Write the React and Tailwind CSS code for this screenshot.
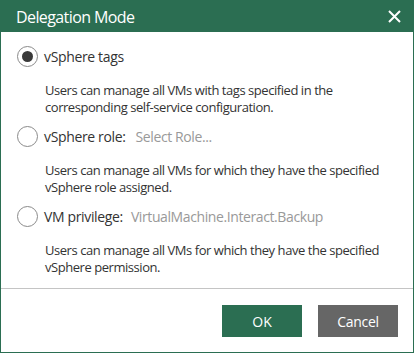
const options = [
  {
    id: 'tags',
    label: 'vSphere tags',
    value: null,
    description: 'Users can manage all VMs with tags specified in the corresponding self-service configuration.',
    checked: true,
  },
  {
    id: 'role',
    label: 'vSphere role:',
    value: 'Select Role...',
    valueGap: 'ml-[10px]',
    description: 'Users can manage all VMs for which they have the specified vSphere role assigned.',
    checked: false,
  },
  {
    id: 'privilege',
    label: 'VM privilege:',
    value: 'VirtualMachine.Interact.Backup',
    valueGap: 'ml-[8px]',
    description: 'Users can manage all VMs for which they have the specified vSphere permission.',
    checked: false,
  },
];

const Radio = ({ checked }) => (
  <span className="flex h-[21px] w-[21px] shrink-0 items-center justify-center rounded-full border border-[#8a8a8a] bg-white">
    {checked && <span className="h-[11px] w-[11px] rounded-full bg-[#3a3a3a]" />}
  </span>
);

const App = () => {
  return (
    <div className="h-[354px] w-[415px] bg-white" style={{ fontFamily: '"Open Sans", "Noto Sans", sans-serif' }}>
      <div className="flex h-[353px] w-[414px] flex-col border border-[#2b6e52]">
        <div className="flex h-[31px] shrink-0 items-center justify-between bg-[#2b6e52] pl-[15px] pr-[12px]">
          <span className="text-[16px] tracking-[-0.6px] text-white">Delegation Mode</span>
          <svg width="13" height="13" viewBox="0 0 13 13" className="mb-[1px]">
            <path d="M1 1 L12 12 M12 1 L1 12" stroke="#fff" strokeWidth="2" />
          </svg>
        </div>

        <div className="flex flex-1 flex-col gap-[10px] pl-[16px] pr-4 pt-[14px]">
          {options.map((o) => (
            <div key={o.id}>
              <div className="flex h-[21px] items-center">
                <Radio checked={o.checked} />
                <span className="ml-[6px] text-[14px] leading-[20px] tracking-[-0.35px] text-[#333]">{o.label}</span>
                {o.value && (
                  <span className={`${o.valueGap} text-[14px] leading-[20px] tracking-[-0.4px] text-[#999]`}>{o.value}</span>
                )}
              </div>
              <p className="mt-[15px] pl-[28px] text-[13px] leading-[17px] tracking-[-0.45px] text-[#333]">{o.description}</p>
            </div>
          ))}
        </div>

        <div className="flex shrink-0 justify-end gap-4 border-t border-[#c4c4c4] pb-[15px] pr-[15px] pt-[16px]">
          <button className="h-[32px] w-[80px] bg-[#2b6e52] text-[14px] text-white">OK</button>
          <button className="h-[32px] w-[80px] bg-[#666] text-[14px] tracking-[-0.3px] text-white">Cancel</button>
        </div>
      </div>
    </div>
  );
};

export default App;
